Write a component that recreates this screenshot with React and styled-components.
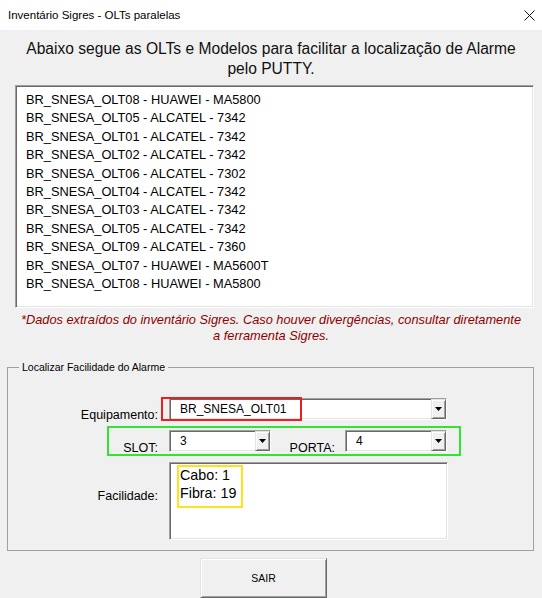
import React from 'react'
import styled, { createGlobalStyle } from 'styled-components'

const GlobalStyle = createGlobalStyle`
  html, body {
    margin: 0;
    padding: 0;
    background: #f0f0f0;
  }
  body {
    font-family: "Liberation Sans", Arial, sans-serif;
    color: #000;
  }
`

const olts = [
  'BR_SNESA_OLT08 - HUAWEI - MA5800',
  'BR_SNESA_OLT05 - ALCATEL - 7342',
  'BR_SNESA_OLT01 - ALCATEL - 7342',
  'BR_SNESA_OLT02 - ALCATEL - 7342',
  'BR_SNESA_OLT06 - ALCATEL - 7302',
  'BR_SNESA_OLT04 - ALCATEL - 7342',
  'BR_SNESA_OLT03 - ALCATEL - 7342',
  'BR_SNESA_OLT05 - ALCATEL - 7342',
  'BR_SNESA_OLT09 - ALCATEL - 7360',
  'BR_SNESA_OLT07 - HUAWEI - MA5600T',
  'BR_SNESA_OLT08 - HUAWEI - MA5800',
]

const Window = styled.div`
  width: 542px;
  height: 598px;
  overflow: hidden;
  background: #f0f0f0;
  display: flex;
  flex-direction: column;
  & > * {
    flex: none;
  }
`

const TitleBar = styled.div`
  height: 30px;
  background: #fff;
  display: flex;
  align-items: center;
  justify-content: space-between;
  padding-left: 8px;
`

const Title = styled.span`
  font-size: 11.5px;
`

const CloseButton = styled.div`
  width: 26px;
  height: 30px;
  display: flex;
  align-items: center;
  justify-content: center;
`

const Heading = styled.div`
  margin-top: 9px;
  font-size: 15.6px;
  line-height: 20px;
  text-align: center;
  color: #111;
`

const sunken = `
  border: 1px solid;
  border-color: #a0a0a0 #fff #fff #a0a0a0;
  box-shadow: inset 1px 1px 0 #696969, inset -1px -1px 0 #e3e3e3;
  background: #fff;
  box-sizing: border-box;
`

const raised = `
  border: 1px solid;
  border-color: #e3e3e3 #696969 #696969 #e3e3e3;
  box-shadow: inset 1px 1px 0 #fff, inset -1px -1px 0 #a0a0a0;
  background: #f0f0f0;
  box-sizing: border-box;
`

const ListBox = styled.div`
  ${sunken}
  margin: 6px 0 0 15px;
  width: 519px;
  height: 223px;
  padding: 5px 0 0 10px;
  font-size: 12.8px;
  line-height: 18.4px;
`

const Note = styled.div`
  margin-top: 4px;
  font-size: 12.8px;
  font-style: italic;
  line-height: 16px;
  color: #8e0000;
  text-align: center;
`

const GroupBox = styled.fieldset`
  margin: 16px 0 0 7px;
  width: 527px;
  min-width: 0;
  box-sizing: border-box;
  border: 1px solid #a0a0a0;
  padding: 24px 0 10px 0;
  display: flex;
  flex-direction: column;
`

const Legend = styled.legend`
  font-size: 10.5px;
  line-height: 14px;
  padding: 0 3px;
  margin-left: 11px;
`

const Row = styled.div`
  position: relative;
  display: flex;
  align-items: flex-start;
  height: ${p => p.$height}px;
  margin-top: ${p => p.$gap || 0}px;
`

const Label = styled.div`
  width: ${p => p.$width || 150}px;
  flex: none;
  box-sizing: border-box;
  text-align: right;
  font-size: 12.5px;
  line-height: 16px;
  padding-top: ${p => p.$pad}px;
  padding-right: ${p => p.$right || 0}px;
`

const Combo = styled.div`
  ${sunken}
  width: ${p => p.$width}px;
  height: 22px;
  margin-left: ${p => p.$offset || 0}px;
  display: flex;
  flex: none;
`

const ComboText = styled.div`
  flex: 1;
  padding-left: 10px;
  font-size: 12px;
  line-height: 20px;
  white-space: nowrap;
`

const DropButton = styled.div`
  ${raised}
  width: 15px;
  height: 20px;
  flex: none;
  display: flex;
  align-items: center;
  justify-content: center;
`

const TextArea = styled.div`
  ${sunken}
  position: relative;
  width: 279px;
  height: 78px;
  margin-left: 11px;
  padding: 3px 0 0 10px;
  font-size: 14.3px;
  line-height: 18px;
`

const Marker = styled.div`
  position: absolute;
  z-index: 2;
  left: ${p => p.$left}px;
  top: ${p => p.$top}px;
  width: ${p => p.$w}px;
  height: ${p => p.$h}px;
  border: 2px solid ${p => p.$color};
  box-sizing: border-box;
  pointer-events: none;
`

const ExitButton = styled.button`
  ${raised}
  margin: 7px 0 0 200px;
  width: 127px;
  height: 40px;
  padding: 0;
  font-family: "Liberation Sans", Arial, sans-serif;
  font-size: 10.5px;
  color: #000;
`

function Arrow() {
  return (
    <svg width="7" height="4" viewBox="0 0 7 4">
      <polygon points="0,0 7,0 3.5,4" fill="#000" />
    </svg>
  )
}

function Select({ value, width, offset }) {
  return (
    <Combo $width={width} $offset={offset}>
      <ComboText>{value}</ComboText>
      <DropButton>
        <Arrow />
      </DropButton>
    </Combo>
  )
}

export default function App() {
  return (
    <Window>
      <GlobalStyle />
      <TitleBar>
        <Title>Inventário Sigres - OLTs paralelas</Title>
        <CloseButton>
          <svg width="11" height="11" viewBox="0 0 11 11">
            <path d="M0.5 0.5 L10.5 10.5 M10.5 0.5 L0.5 10.5" stroke="#111" strokeWidth="1" />
          </svg>
        </CloseButton>
      </TitleBar>

      <Heading>
        Abaixo segue as OLTs e Modelos para facilitar a localização de Alarme
        <br />
        pelo PUTTY.
      </Heading>

      <ListBox>
        {olts.map((olt, i) => (
          <div key={i}>{olt}</div>
        ))}
      </ListBox>

      <Note>
        *Dados extraídos do inventário Sigres. Caso houver divergências, consultar diretamente
        <br />
        a ferramenta Sigres.
      </Note>

      <GroupBox>
        <Legend>Localizar Facilidade do Alarme</Legend>

        <Row $height={22}>
          <Label $pad={9}>Equipamento:</Label>
          <Select value="BR_SNESA_OLT01" width={278} offset={11} />
          <Marker $color="#e82020" $left={153} $top={-1} $w={141} $h={24} />
        </Row>

        <Row $height={22} $gap={10}>
          <Label $pad={10}>SLOT:</Label>
          <Select value="3" width={102} offset={11} />
          <Label $pad={10} $width={74} $right={10}>PORTA:</Label>
          <Select value="4" width={102} />
          <Marker $color="#33e333" $left={99} $top={-4} $w={354} $h={30} />
        </Row>

        <Row $height={78} $gap={10}>
          <Label $pad={26}>Facilidade:</Label>
          <TextArea>
            <div>Cabo: 1</div>
            <div>Fibra: 19</div>
            <Marker $color="#ffe21a" $left={7} $top={2} $w={66} $h={43} />
          </TextArea>
        </Row>
      </GroupBox>

      <ExitButton>SAIR</ExitButton>
    </Window>
  )
}
